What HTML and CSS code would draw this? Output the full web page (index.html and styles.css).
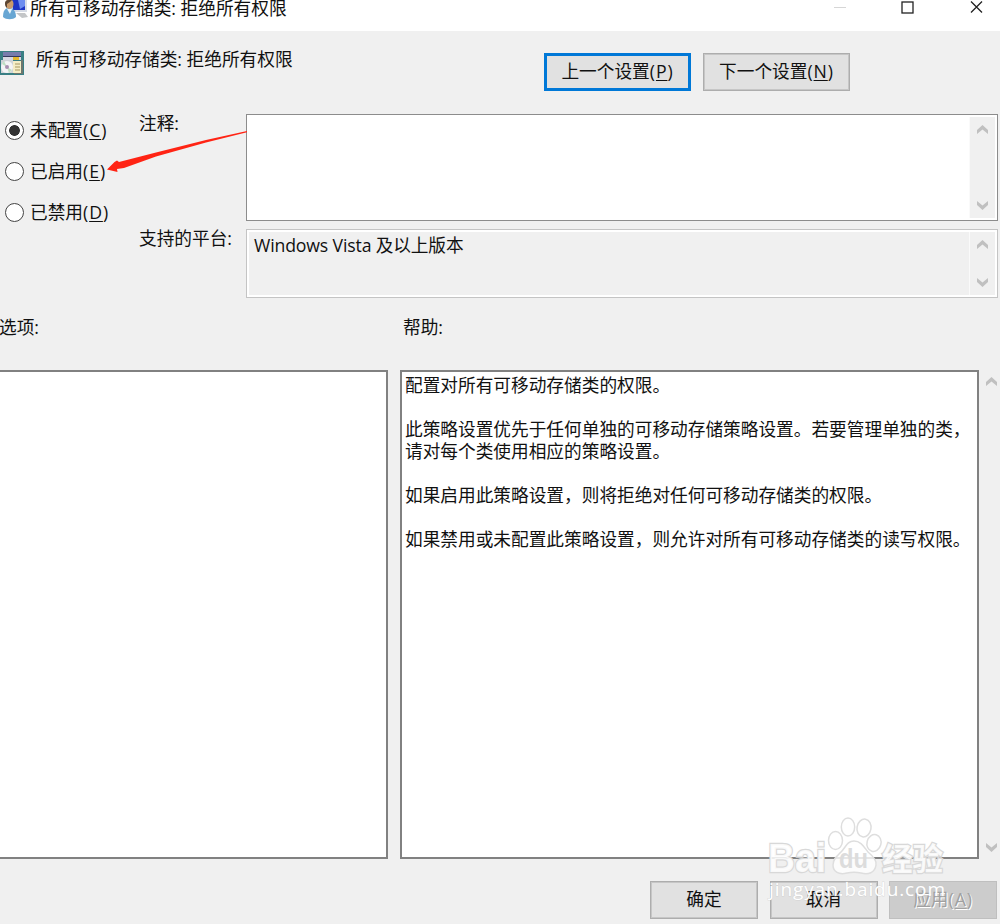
FILE: index.html
```html
<!DOCTYPE html>
<html lang="zh-CN">
<head>
<meta charset="utf-8">
<title>所有可移动存储类: 拒绝所有权限</title>
<link rel="stylesheet" href="styles.css">
</head>
<body>
<div class="window">
  <header class="titlebar">
    <svg class="title-icon" width="26" height="20" viewBox="0 0 26 20">
      <path d="M9 0h16v12H10z" fill="#d7dce6"/><path d="M10 0h13v10H11z" fill="#1d35c5"/><path d="M16 0h7v6l-5 3z" fill="#6d8df0"/>
      <path d="M14 13h9l3 4-6 1z" fill="#c4c6c8"/>
      <path d="M1 17c0-6 2-9 6-9s7 3 7 9c-3 3-10 3-13 0z" fill="#68a6d3"/><path d="M5 9l3 5 2-5z" fill="#e8f3fa"/>
      <ellipse cx="7.500" cy="4" rx="4" ry="5" fill="#c99a6b"/><path d="M3 4c0-3 1-4 4-4h3L8 2 5 4v4C4 7 3 6 3 4z" fill="#5c4634"/>
    </svg>
    <h1 class="title">所有可移动存储类: 拒绝所有权限</h1>
    <svg class="caption-buttons" width="160" height="20" viewBox="0 0 160 20" fill="none">
      <path d="M4 7.500h12" stroke="#d6d6d6"/><rect x="72" y="2" width="11" height="11" stroke="#222" stroke-width="1.300"/><path d="M141 1.500l11 11M152 1.500l-11 11" stroke="#222" stroke-width="1.300"/>
    </svg>
  </header>

  <section class="policy">
    <svg class="policy-icon" width="24" height="24" viewBox="0 0 24 24">
      <path d="M0 0h24v24H0z" fill="#397f84"/><path d="M3 1h18v4H3z" fill="#777cac"/><path d="M3 5h18v4H3z" fill="#d6d8e2"/><path d="M3 5.500h18" stroke="#34385c"/><path d="M13 6h6v3h-6z" fill="#e4b72d"/>
      <path d="M1 9h12v13H1z" fill="#cfd2d6"/><circle cx="7" cy="16" r="6" fill="#f4f4f6"/><path d="M7 16l-5-3 2-3zM7 16l5 3-3 3z" fill="#c1dfc4"/><circle cx="7" cy="16" r="2" fill="#a88fb0"/>
      <path d="M13 10h9v12h-9z" fill="#f5edc5"/><path d="M15 13h5M15 16h5M15 19h5" stroke="#a79761"/><path d="M21 9h2v14h-9v-1h7z" fill="#6e766e"/>
    </svg>
    <h2 class="policy-name">所有可移动存储类: 拒绝所有权限</h2>
    <div class="nav">
      <button class="btn btn-nav btn-focus">上一个设置<span class="key">(<u>P</u>)</span></button>
      <button class="btn btn-nav">下一个设置<span class="key">(<u>N</u>)</span></button>
    </div>
  </section>

  <section class="config">
    <div class="radios">
      <label class="radio"><span class="dot dot-on"></span>未配置<span class="key">(<u>C</u>)</span></label>
      <label class="radio"><span class="dot"></span>已启用<span class="key">(<u>E</u>)</span></label>
      <label class="radio"><span class="dot"></span>已禁用<span class="key">(<u>D</u>)</span></label>
    </div>
    <div class="fields">
      <span class="field-label">注释:</span>
      <div class="field field-comment"><p class="field-text"></p>
        <div class="scroll"><svg class="chev" viewBox="0 0 11 9"><path d="M0 9V5L5.500 0 11 5v4L5.500 4.500z"/></svg><svg class="chev" viewBox="0 0 11 9"><path d="M0 0v4L5.500 9 11 4V0L5.500 4.500z"/></svg></div>
      </div>
      <span class="field-label">支持的平台:</span>
      <div class="field field-platform"><p class="field-text">Windows Vista 及以上版本</p>
        <div class="scroll"><svg class="chev" viewBox="0 0 11 9"><path d="M0 9V5L5.500 0 11 5v4L5.500 4.500z"/></svg><svg class="chev" viewBox="0 0 11 9"><path d="M0 0v4L5.500 9 11 4V0L5.500 4.500z"/></svg></div>
      </div>
    </div>
    <svg class="arrow" width="142" height="48" viewBox="0 0 142 48"><path d="M141 5L100 14 50 26.500 13 36l-2-1.500L8.500 36 1 43.500 11.500 46l-.5-3 7-1L50 30.500 100 16.500 141 6.300z" fill="#ff2414"/></svg>
  </section>

  <section class="panels">
    <h3 class="panel-title">选项:</h3>
    <h3 class="panel-title">帮助:</h3>
    <div class="panel panel-options"></div>
    <div class="panel panel-help">
      <p>配置对所有可移动存储类的权限。</p>
      <p>此策略设置优先于任何单独的可移动存储策略设置。若要管理单独的类，<br>请对每个类使用相应的策略设置。</p>
      <p>如果启用此策略设置，则将拒绝对任何可移动存储类的权限。</p>
      <p>如果禁用或未配置此策略设置，则允许对所有可移动存储类的读写权限。</p>
    </div>
    <div class="scroll scroll-help"><svg class="chev" viewBox="0 0 11 9"><path d="M0 9V5L5.500 0 11 5v4L5.500 4.500z"/></svg><svg class="chev" viewBox="0 0 11 9"><path d="M0 0v4L5.500 9 11 4V0L5.500 4.500z"/></svg></div>
  </section>

  <footer class="actions">
    <button class="btn">确定</button>
    <button class="btn">取消</button>
    <button class="btn btn-disabled">应用<span class="key">(<u>A</u>)</span></button>
  </footer>

  <svg class="watermark" width="190" height="92" viewBox="0 0 190 92">
    <text class="wm-brand" x="3" y="56" textLength="58" lengthAdjust="spacingAndGlyphs">Bai</text>
    <g class="paw">
      <ellipse cx="70.500" cy="24.500" rx="7" ry="9"/><ellipse cx="83" cy="11" rx="6.700" ry="9"/><ellipse cx="99" cy="12" rx="7" ry="9" transform="rotate(10 99 12)"/><ellipse cx="109" cy="27" rx="7" ry="8.500" transform="rotate(15 109 27)"/>
      <path d="M89 25c7 0 10 6 14 11 6 5 9 9 8 13-1 8-8 10-15 8-5-1-9-1-14 0-8 2-14-1-14-8 0-6 4-9 8-13 5-5 6-11 13-11z"/>
    </g>
    <text class="wm-du" x="74" y="52" textLength="29" lengthAdjust="spacingAndGlyphs">du</text>
    <text class="wm-cjk" x="117" y="54" textLength="61" lengthAdjust="spacingAndGlyphs">经验</text>
    <text class="wm-url" x="4" y="80" textLength="176">jingyan.baidu.com</text>
  </svg>
</div>
</body>
</html>
```

FILE: styles.css
```css
* { box-sizing: border-box; }
body {
  margin: 0;
  background: #f0f0f0;
  color: #111;
  font: 17.68px/22px "Open Sans", "Noto Sans CJK SC", sans-serif;
}
h1, h2, h3, p { margin: 0; font-size: inherit; font-weight: 400; }
u { text-decoration-thickness: 1px; text-underline-offset: 2px; }
.key { letter-spacing: .9px; }

.window { position: relative; display: flex; flex-direction: column; width: 1000px; height: 924px; overflow: hidden; }

.titlebar { display: flex; align-items: flex-start; height: 31px; padding-left: 2px; background: #fff; }
.title { flex: 1; height: 24px; padding-left: 2px; line-height: 16px; white-space: nowrap; }
.caption-buttons { margin-right: 10px; }

.policy { display: flex; align-items: flex-start; height: 83px; padding-top: 20px; }
.policy-name { width: 508px; margin: -3px 0 0 12px; white-space: nowrap; }
.nav { display: flex; gap: 12px; padding-top: 2px; }

.btn {
  width: 108px; height: 38px; padding: 0 0 2px;
  border: 1px solid #adadad; background: #e1e1e1; box-shadow: inset 0 0 0 1px #c6c6c6;
  color: #111; font: inherit; white-space: nowrap;
}
.btn-nav { width: 147px; }
.btn-focus { border: 3px solid #0078d7; box-shadow: none; }
.btn-disabled { border-color: #bfbfbf; background: #ccc; box-shadow: none; color: #a0a0a0; text-shadow: 1px 1px #fff; }

.config { position: relative; display: flex; height: 184px; }
.radios { display: flex; flex-direction: column; gap: 19px; width: 138px; padding: 5px 0 0 5px; }
.radio { display: flex; align-items: center; height: 22px; white-space: nowrap; }
.dot { width: 19px; height: 19px; margin-right: 6px; border: 1.5px solid #444; border-radius: 50%; background: #fff; }
.dot-on { background: radial-gradient(circle, #333 5px, #fff 5.7px); }
.fields { display: grid; grid-template-columns: 108px 752px; grid-template-rows: 107px 69px; row-gap: 8px; }
.field-label { margin: -2px 0 0 1px; white-space: nowrap; }
.field { display: flex; justify-content: space-between; padding: 2px; border: 1px solid #8c8c8c; }
.field-comment { background: #fff; }
.field-platform { border-color: #c4c4c4; background: #f0f0f0; box-shadow: inset 0 0 0 2px #fff; }
.field-text { padding: 2px 0 0 5px; letter-spacing: -.15px; }
.scroll { display: flex; flex-direction: column; justify-content: space-between; align-items: center; width: 26px; padding: 8px 0; border-left: 1px solid #fafafa; background: #f0f0f0; }
.chev { width: 11px; height: 9px; fill: #c0c0c0; }
.arrow { position: absolute; left: 106px; top: 12px; }

.panels { display: grid; grid-template-columns: 388px 579px 21px; grid-template-rows: 53px 489px; padding-top: 19px; }
.panel-title { margin: -1px 0 0 -1px; white-space: nowrap; }
.panel-title + .panel-title { grid-column: 2 / 4; margin-left: 15px; }
.panel { border: 2px solid #818181; background: #fff; }
.panel-options { border-left: 0; }
.panel-help { display: flex; flex-direction: column; gap: 22px; margin-left: 12px; width: 579px; padding: 2px 0 0 3px; white-space: nowrap; }
.scroll-help { width: 25px; margin-left: 12px; padding: 7px 0; border: 0; background: none; }

.actions { display: flex; gap: 11.5px; padding: 22px 0 0 650px; }
.actions .btn { flex: none; }

.watermark { position: absolute; left: 765px; top: 816px; pointer-events: none; }
.paw { fill: rgba(255, 255, 255, .8); stroke: #dedede; stroke-width: 1.5; }
.watermark text { paint-order: stroke; fill: rgba(255, 255, 255, .85); stroke: #d8d8d8; stroke-width: 2.5px; }
.wm-brand { font: 700 41px "Liberation Sans", sans-serif; }
.watermark .wm-du { font: 700 27px "Liberation Sans", sans-serif; fill: #dcdcdc; stroke: none; }
.wm-cjk { font: 700 31px "Noto Sans CJK SC", sans-serif; }
.watermark .wm-url { font: 19px "Open Sans", sans-serif; fill: #fff; stroke: rgba(200, 200, 200, .5); stroke-width: 1px; }
```
